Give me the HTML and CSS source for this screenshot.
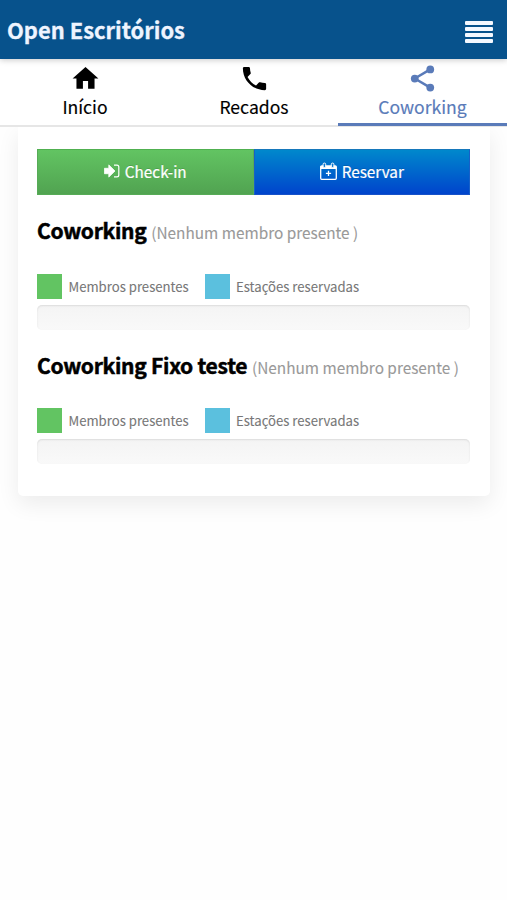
FILE: index.html
```html
<!DOCTYPE html>
<html lang="pt-BR">
<head>
<meta charset="utf-8">
<title>Open Escritórios</title>
<link rel="stylesheet" href="styles.css">
</head>
<body>
<header class="topbar">
  <h1 class="brand">Open Escritórios</h1>
  <button class="menu" aria-label="Menu"><i></i><i></i><i></i><i></i></button>
</header>
<nav class="tabs">
  <a class="tab"><svg viewBox="0 0 24 24"><path d="M10 20v-6h4v6h5v-8h3L12 3 2 12h3v8z"/></svg><span>Início</span></a>
  <a class="tab"><svg viewBox="0 0 24 24"><path d="M6.62 10.79c1.44 2.83 3.76 5.14 6.59 6.59l2.2-2.2c.27-.27.67-.36 1.02-.24 1.12.37 2.33.57 3.57.57.55 0 1 .45 1 1V20c0 .55-.45 1-1 1-9.39 0-17-7.61-17-17 0-.55.45-1 1-1h3.5c.55 0 1 .45 1 1 0 1.25.2 2.45.57 3.57.11.35.03.74-.25 1.02l-2.2 2.2z"/></svg><span>Recados</span></a>
  <a class="tab active"><svg viewBox="0 0 24 24"><path d="M6 12 18 5M6 12l12 7" fill="none" stroke="currentColor" stroke-width="2"/><circle cx="6" cy="12" r="3"/><circle cx="18" cy="5" r="3"/><circle cx="18" cy="19" r="3"/></svg><span>Coworking</span></a>
</nav>
<main class="card">
  <div class="actions">
    <button class="btn checkin"><svg viewBox="0 0 16 14"><path d="M.4 4.3h4.4V.9L11 7l-6.2 6.1V9.7H.4z" stroke="currentColor" stroke-width=".8" stroke-linejoin="round"/><path d="M10 1.2h2.9a1.9 1.9 0 0 1 1.9 1.9v7.8a1.9 1.9 0 0 1-1.9 1.9H10" fill="none" stroke="currentColor" stroke-width="1.2"/></svg><span>Check-in</span></button>
    <button class="btn reserve"><svg viewBox="0 0 17 18"><path d="M1.7 4h13.6a1 1 0 0 1 1 1v11.3a1 1 0 0 1-1 1H1.7a1 1 0 0 1-1-1V5a1 1 0 0 1 1-1zM8.5 8.7v5.2M5.9 11.3h5.2" fill="none" stroke="currentColor" stroke-width="1.3"/><path d="M.7 4h15.6v3H.7z"/><rect x="3.1" y="1.1" width="2.6" height="4.3" rx="1.2" fill="#0878cf" stroke="currentColor"/><rect x="11.3" y="1.1" width="2.6" height="4.3" rx="1.2" fill="#0878cf" stroke="currentColor"/></svg><span>Reservar</span></button>
  </div>
  <section class="room">
    <h2><span class="name">Coworking</span> <small>(Nenhum membro presente )</small></h2>
    <div class="legend"><i class="present"></i><span class="membros">Membros presentes</span><i class="reserved"></i><span>Estações reservadas</span></div>
    <div class="progress"></div>
  </section>
  <section class="room">
    <h2><span class="name">Coworking Fixo teste</span> <small>(Nenhum membro presente )</small></h2>
    <div class="legend"><i class="present"></i><span class="membros">Membros presentes</span><i class="reserved"></i><span>Estações reservadas</span></div>
    <div class="progress"></div>
  </section>
</main>
</body>
</html>
```
FILE: styles.css
```css
* { box-sizing: border-box; }
body { margin: 0; min-height: 900px; background: #fefefe; color: #000; font-family: "Noto Sans CJK SC", "Noto Sans", sans-serif; }
button { border: 0; padding: 0; margin: 0; font: inherit; color: inherit; background: none; }
svg { display: block; fill: currentColor; }
.topbar { position: relative; z-index: 2; height: 59px; padding: 2px 14px 0 7px; display: flex; align-items: center; justify-content: space-between; background: #07528c; box-shadow: 0 1px 6px rgba(0,0,0,.22); }
.brand { margin: 0; padding-bottom: 1px; font-size: 21.9px; line-height: 30px; font-weight: 700; color: #eef4ff; -webkit-text-stroke: .3px; white-space: nowrap; }
.menu { width: 28px; padding-top: 2px; display: grid; gap: 2px; }
.menu i { height: 4px; border-radius: 1px; background: #f4f8ff; }
.tabs { position: relative; z-index: 1; height: 68px; display: grid; grid-template-columns: repeat(3, 1fr); background: #fff; border-bottom: 2px solid #e6e6e6; }
.tab { height: 67px; padding: 4px 0 0 1px; display: flex; flex-direction: column; align-items: center; font-size: 17.6px; line-height: 26px; -webkit-text-stroke: .15px; }
.tab svg { width: 31px; height: 31px; }
.tab.active { padding-left: 0; color: #5a7bb9; border-bottom: 3px solid #5a7bb9; }
.card { margin: 0 17px 0 18px; height: 369px; padding: 22px 20px 0 19px; background: #fff; border-radius: 0 0 5px 5px; box-shadow: 0 8px 22px rgba(0,0,0,.075); }
.actions { display: grid; grid-template-columns: 1fr 1fr; height: 46px; }
.btn { display: flex; align-items: center; justify-content: center; gap: 5px; color: #fff; font-size: 15.3px; line-height: 24px; padding-bottom: 2px; -webkit-text-stroke: .2px; text-shadow: 0 -1px 0 rgba(0,0,0,.12); }
.checkin { background: linear-gradient(#62c462, #51a351); border: 1px solid #57ab57; border-top-color: #50b050; }
.reserve { background: linear-gradient(#08c, #04c); border: 1px solid #1764c0; border-color: #1678bb #1760c8 #1752c8; }
.checkin svg { width: 16px; height: 14px; }
.reserve svg { width: 17px; height: 18px; }
.room { height: 134.4px; }
.room h2 { margin: 0; padding-top: 20px; height: 79px; font-size: 21px; line-height: 30px; font-weight: 700; white-space: nowrap; }
.room + .room h2 { padding-top: 20.6px; }
.name { letter-spacing: -.28px; -webkit-text-stroke: .5px; }
.room small { font-size: 15.35px; font-weight: 400; color: #999; -webkit-text-stroke: .1px; }
.legend { height: 25px; display: flex; align-items: center; font-size: 13.15px; line-height: 24px; color: #777; white-space: nowrap; -webkit-text-stroke: .1px; }
.legend i { width: 25px; height: 25px; margin-right: 6.5px; flex: none; }
.present { background: #62c462; }
.reserved { background: #5bc0de; }
.membros { width: 136px; }
.progress { height: 25px; margin-top: 6px; border-radius: 5px; background: linear-gradient(#f4f4f4, #f9f9f9); box-shadow: inset 0 1px 2px rgba(0,0,0,.1); }
```
